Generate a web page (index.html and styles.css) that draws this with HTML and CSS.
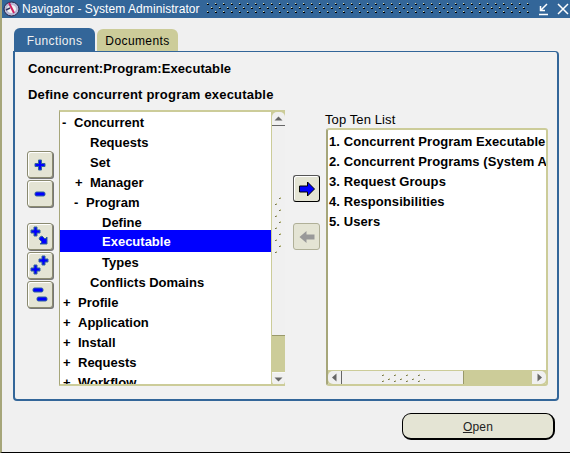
FILE: index.html
```html
<!DOCTYPE html>
<html lang="en">
<head>
<meta charset="utf-8">
<title>Navigator - System Administrator</title>
<link rel="stylesheet" href="styles.css">
</head>
<body>
<svg class="defs" width="0" height="0" aria-hidden="true">
  <defs>
    <pattern id="title-dots" width="8" height="8" patternUnits="userSpaceOnUse">
      <rect x="1" y="0" width="1" height="1" fill="#dcdcb0"/><rect x="1" y="1" width="1" height="1" fill="#000"/><rect x="2" y="1" width="1" height="1" fill="#000"/>
      <rect x="5" y="4" width="1" height="1" fill="#dcdcb0"/><rect x="5" y="5" width="1" height="1" fill="#000"/><rect x="6" y="5" width="1" height="1" fill="#000"/>
    </pattern>
    <pattern id="v-dots" width="7" height="12" patternUnits="userSpaceOnUse">
      <rect x="0" y="7" width="1" height="1" fill="#707050"/><rect x="1" y="7" width="1" height="1" fill="#a6a67a"/><rect x="1" y="6" width="1" height="1" fill="#cccc99"/>
      <rect x="4" y="1" width="1" height="1" fill="#707050"/><rect x="5" y="1" width="1" height="1" fill="#a6a67a"/><rect x="5" y="0" width="1" height="1" fill="#cccc99"/>
    </pattern>
    <pattern id="h-dots" width="12" height="6" patternUnits="userSpaceOnUse">
      <rect x="1" y="1" width="1" height="1" fill="#707050"/><rect x="2" y="1" width="1" height="1" fill="#a6a67a"/><rect x="2" y="0" width="1" height="1" fill="#cccc99"/>
      <rect x="7" y="5" width="1" height="1" fill="#707050"/><rect x="8" y="5" width="1" height="1" fill="#a6a67a"/><rect x="8" y="4" width="1" height="1" fill="#cccc99"/>
    </pattern>
  </defs>
</svg>
<div class="window">
  <header class="titlebar">
    <svg class="app-icon" width="17" height="16" viewBox="0 0 17 16"><ellipse cx="8.500" cy="8" rx="7.500" ry="7" fill="#b9b9d6" stroke="#26264a"/><ellipse cx="8.500" cy="8" rx="4.500" ry="4" fill="#f4f4f4"/><path d="M6 2 L11 12" stroke="#d02060" stroke-width="2"/><path d="M3 9 L7 7" stroke="#33335f" stroke-width="1.500"/></svg>
    <span class="title-text">Navigator - System Administrator</span>
    <svg class="title-grip"><rect width="100%" height="100%" fill="url(#title-dots)"/></svg>
    <svg class="win-icon" width="15" height="14" viewBox="0 0 15 14"><path d="M3 12.500H12M11 2L5 8M4.500 4V8.500H9" fill="none" stroke="#fff" stroke-width="1.500"/></svg>
    <svg class="win-icon" width="14" height="14" viewBox="0 0 14 14"><path d="M2 2L12 12M12 2L2 12" fill="none" stroke="#fff" stroke-width="1.500"/></svg>
  </header>
  <main class="body">
    <nav class="tabs">
      <div class="tab tab-active">Functions</div>
      <div class="tab tab-idle">Documents</div>
    </nav>
    <section class="panel">
      <div class="crumb">Concurrent:Program:Executable</div>
      <div class="desc">Define concurrent program executable</div>
      <div class="workarea">
        <div class="tool-col">
          <button class="tool"><svg width="14" height="14" viewBox="0 0 14 14"><path class="ico" d="M5.500 2h3v3.500H12v3H8.500V12h-3V8.500H2v-3h3.500z"/></svg></button>
          <button class="tool"><svg width="14" height="14" viewBox="0 0 14 14"><rect class="ico" x="2" y="5" width="10" height="4" rx="1.500"/></svg></button>
          <div class="tool-gap"></div>
          <button class="tool"><svg width="22" height="22" viewBox="0 0 22 22"><path class="ico" d="M5 1h3v3h3v3H8v3H5V7H2V4h3z"/><path class="ico" d="M11 11l2-1 3 3 2-2v7h-7l2-2-3-3z"/></svg></button>
          <button class="tool"><svg width="22" height="22" viewBox="0 0 22 22"><path class="ico" d="M13 1h3v3h3v3h-3v3h-3V7h-3V4h3z"/><path class="ico" d="M5 10h3v3h3v3H8v3H5v-3H2v-3h3z"/></svg></button>
          <button class="tool"><svg width="22" height="22" viewBox="0 0 22 22"><rect class="ico" x="4" y="4" width="10" height="4" rx="1.500"/><rect class="ico" x="8" y="13" width="10" height="4" rx="1.500"/></svg></button>
        </div>
        <div class="tree-box">
          <ul class="tree">
            <li class="node l0"><span class="mark">-</span>Concurrent</li>
            <li class="node l2">Requests</li>
            <li class="node l2">Set</li>
            <li class="node l1"><span class="mark mark-plus">+</span>Manager</li>
            <li class="node l1b"><span class="mark">-</span>Program</li>
            <li class="node l3">Define</li>
            <li class="node l3 selected">Executable</li>
            <li class="node l3">Types</li>
            <li class="node l2">Conflicts Domains</li>
            <li class="node l0p"><span class="mark mark-plus">+</span>Profile</li>
            <li class="node l0p"><span class="mark mark-plus">+</span>Application</li>
            <li class="node l0p"><span class="mark mark-plus">+</span>Install</li>
            <li class="node l0p"><span class="mark mark-plus">+</span>Requests</li>
            <li class="node l0p"><span class="mark mark-plus">+</span>Workflow</li>
          </ul>
          <div class="vscroll">
            <div class="sb-btn sb-top"><svg width="13" height="13" viewBox="0 0 13 13"><path d="M2.500 8.500L6.500 4.500L10.500 8.500Z" fill="#666"/></svg></div>
            <div class="v-thumb"><svg class="v-grip"><rect width="100%" height="100%" fill="url(#v-dots)"/></svg></div>
            <div class="sb-track"></div>
            <div class="sb-btn sb-bottom"><svg width="13" height="13" viewBox="0 0 13 13"><path d="M2.500 4.500L6.500 8.500L10.500 4.500Z" fill="#666"/></svg></div>
          </div>
        </div>
        <div class="move-col">
          <button class="move move-on"><svg width="18" height="18" viewBox="0 0 18 18"><path d="M1.500 6h8V2l7 7-7 7v-4h-8z" fill="#0000ff" stroke="#000"/></svg></button>
          <button class="move move-off"><svg width="18" height="18" viewBox="0 0 18 18"><path d="M16.500 6.500h-8V3l-7 6 7 6v-3.500h8z" fill="#999"/></svg></button>
        </div>
        <div class="top-col">
          <div class="top-label">Top Ten List</div>
          <div class="list-box">
            <ol class="top-list">
              <li>1. Concurrent Program Executable</li>
              <li>2. Concurrent Programs (System Administrator)</li>
              <li>3. Request Groups</li>
              <li>4. Responsibilities</li>
              <li>5. Users</li>
            </ol>
            <div class="hscroll">
              <div class="hs-btn hs-left"><svg width="13" height="13" viewBox="0 0 13 13"><path d="M8.500 2.500L4 6.500L8.500 10.500Z" fill="#666"/></svg></div>
              <div class="h-thumb"><svg class="h-grip"><rect width="100%" height="100%" fill="url(#h-dots)"/></svg></div>
              <div class="hs-track"></div>
              <div class="hs-btn hs-right"><svg width="13" height="13" viewBox="0 0 13 13"><path d="M4.500 2.500L9 6.500L4.500 10.500Z" fill="#666"/></svg></div>
            </div>
          </div>
        </div>
      </div>
    </section>
    <footer class="actions">
      <button class="open"><u>O</u>pen</button>
    </footer>
  </main>
</div>
</body>
</html>
```
FILE: styles.css
```css
* { box-sizing: border-box; }
html, body { margin: 0; padding: 0; }
body { width: 570px; height: 453px; overflow: hidden; font-family: "Liberation Sans", Arial, sans-serif; font-size: 12px; color: #000; background: #f0f0f0; }
.defs { display: block; height: 0; }
ul, ol { list-style: none; margin: 0; padding: 0; }
button { font: inherit; padding: 0; display: flex; align-items: center; justify-content: center; }
.window { width: 570px; height: 453px; display: flex; flex-direction: column; border-left: 2px solid #a6a67a; border-bottom: 1px solid #000; overflow: hidden; }
.titlebar { height: 18px; margin-left: -2px; background: #336699; display: flex; align-items: center; color: #fff; flex: none; padding-left: 3px; }
.app-icon { flex: none; }
.title-text { font-size: 12px; letter-spacing: 0.070px; margin-left: 2px; white-space: nowrap; width: 186px; }
.title-grip { flex: none; width: 325px; height: 12px; }
.win-icon { flex: none; margin-left: 5px; }
.body { flex: 1; display: flex; flex-direction: column; padding: 10px 0 0 11px; min-height: 0; }
.tabs { display: flex; height: 23px; padding-left: 1px; flex: none; }
.tab { height: 23px; border-radius: 6px 6px 0 0; padding-top: 6px; text-align: center; letter-spacing: 0.400px; }
.tab-active { width: 81px; background: #336699; color: #f0f0f0; }
.tab-idle { width: 81px; margin-left: 2px; margin-top: 1px; height: 22px; padding-top: 5px; background: #cccc99; }
.panel { width: 546px; height: 350px; border: 2px solid #336699; border-top-width: 1px; border-radius: 0 4px 4px 4px; background: #f1f1f1; padding: 9px 0 0 13px; flex: none; }
.crumb { font-size: 13px; font-weight: bold; letter-spacing: 0.080px; height: 17px; line-height: 16px; }
.desc { font-size: 13px; font-weight: bold; letter-spacing: 0.200px; height: 17px; line-height: 16px; margin-top: 9px; }
.workarea { display: flex; height: 276px; margin: 6px 0 0 -1px; }
.tool-col { width: 26px; margin-right: 6px; padding-top: 41px; display: flex; flex-direction: column; gap: 2px; flex: none; }
.tool-gap { height: 12px; }
.tool { width: 26px; height: 27px; flex: none; background: #e4e4d4; border: 1px solid #8a8a70; border-radius: 3px; box-shadow: inset 1px 1px 0 #fff, 1px 1px 0 #777; }
.ico { fill: #0000ff; stroke: #336699; stroke-width: 1; }
.tree-box { width: 226px; height: 276px; display: flex; border: 2px solid #cccc99; border-right: 0; border-left: 1px solid #a6a67a; background: #fff; overflow: hidden; flex: none; }
.tree { flex: 1; min-width: 0; padding-top: 1px; font-size: 13px; }
.node { height: 20px; line-height: 20px; font-weight: bold; white-space: nowrap; }
.mark { display: inline-block; width: 12px; }
.mark-plus { width: 15px; }
.l0 { padding-left: 2px; }
.l0p { padding-left: 3px; }
.l1 { padding-left: 15px; }
.l1b { padding-left: 14px; }
.l2 { padding-left: 30px; }
.l3 { padding-left: 42px; }
.selected { background: #0000ff; color: #fff; height: 22px; line-height: 24px; margin: -3px 0 1px; }
.vscroll { width: 14px; flex: none; display: flex; flex-direction: column; border-left: 1px solid #cccc99; background: #cccc99; height: 274px; }
.sb-btn { height: 14px; background: #f0f0f0; flex: none; display: flex; align-items: center; justify-content: center; }
.sb-top { border-radius: 5px 5px 0 0; border-bottom: 1px solid #666; }
.sb-bottom { border-radius: 0 0 5px 5px; border-top: 1px solid #f8f8f8; }
.v-thumb { height: 210px; background: #f0f0f0; border-bottom: 1px solid #99996b; flex: none; display: flex; flex-direction: column; padding: 71px 0 0 3px; }
.v-grip { width: 7px; height: 60px; }
.sb-track { flex: 1; }
.move-col { width: 27px; margin-left: 8px; padding-top: 65px; display: flex; flex-direction: column; gap: 21px; flex: none; }
.move { width: 27px; height: 27px; border-radius: 3px; flex: none; }
.move-on { background: #e4e4d4; border: 1px solid #555; border-right-color: #000; border-bottom-color: #000; box-shadow: inset 1px 1px 0 #fff; }
.move-off { background: #e4e4d4; border: 1px solid #b0b098; }
.top-col { margin-left: 5px; width: 224px; margin-top: 2px; flex: none; }
.top-label { font-size: 13px; height: 15px; line-height: 15px; letter-spacing: 0.100px; margin-bottom: 1px; }
.list-box { width: 222px; margin-left: 1px; height: 258px; border: 2px solid #cccc99; border-left-color: #a6a67a; border-radius: 3px; background: #fff; display: flex; flex-direction: column; overflow: hidden; }
.top-list { flex: 1; min-height: 0; padding: 2px 0 0 1px; overflow: hidden; font-size: 13px; }
.top-list li { height: 20px; line-height: 20px; font-weight: bold; letter-spacing: 0.080px; white-space: nowrap; }
.hscroll { height: 14px; flex: none; display: flex; background: #cccc99; border-top: 1px solid #cccc99; }
.hs-btn { width: 14px; background: #f0f0f0; flex: none; display: flex; align-items: center; justify-content: center; }
.hs-left { border-radius: 5px 0 0 5px; border-right: 1px solid #666; }
.hs-right { border-radius: 0 5px 5px 0; margin-left: auto; }
.h-thumb { width: 122px; background: #f0f0f0; border-right: 1px solid #99996b; flex: none; display: flex; align-items: center; justify-content: center; }
.h-grip { width: 44px; height: 8px; }
.hs-track { flex: 1; }
.actions { display: flex; padding-left: 389px; margin-top: 12px; flex: none; }
.open { width: 153px; height: 27px; border-radius: 9px; background: #e4e4d4; border: 1px solid #000; border-right-width: 2px; border-bottom-width: 2px; letter-spacing: 0.200px; color: #222; padding-top: 2px; }
```
